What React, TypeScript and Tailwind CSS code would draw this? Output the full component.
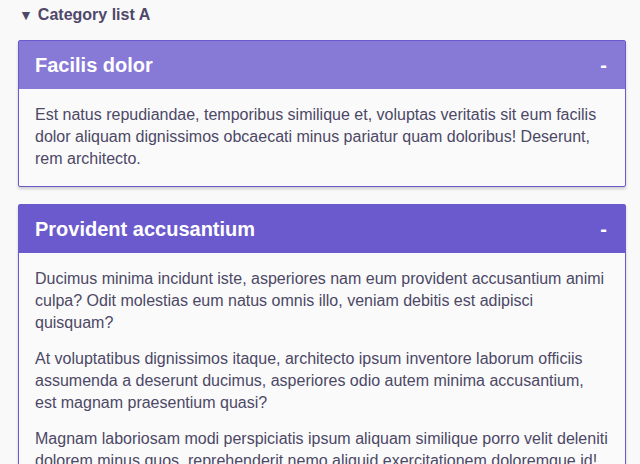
const items = [
  {
    title: "Facilis dolor",
    light: true,
    paragraphs: [
      "Est natus repudiandae, temporibus similique et, voluptas veritatis sit eum facilis dolor aliquam dignissimos obcaecati minus pariatur quam doloribus! Deserunt, rem architecto.",
    ],
  },
  {
    title: "Provident accusantium",
    light: false,
    paragraphs: [
      "Ducimus minima incidunt iste, asperiores nam eum provident accusantium animi culpa? Odit molestias eum natus omnis illo, veniam debitis est adipisci quisquam?",
      "At voluptatibus dignissimos itaque, architecto ipsum inventore laborum officiis assumenda a deserunt ducimus, asperiores odio autem minima accusantium, est magnam praesentium quasi?",
      "Magnam laboriosam modi perspiciatis ipsum aliquam similique porro velit deleniti dolorem minus quos, reprehenderit nemo aliquid exercitationem doloremque id! Voluptatum, quibusdam.",
    ],
  },
];

export default function App() {
  return (
    <div className="h-[464px] overflow-hidden bg-[#f9f9fa] pl-[18px] pr-[14px] font-['Liberation_Sans',Arial,sans-serif] text-[#4c4866]">
      <div className="flex items-center h-[30px] pl-[1px] text-[16px] font-bold text-[#4f4868]">
        <span className="text-[14px] mr-[5px]">▼</span>
        <span>Category list A</span>
      </div>

      <div className="mt-[10px] flex flex-col gap-[17px]">
        {items.map((item, i) => (
          <div
            key={i}
            className="border border-[#6a5acd] rounded-[2px] bg-[#fafafa] shadow-[0_2px_3px_rgba(0,0,0,0.18)]"
          >
            <div
              className={
                item.light
                  ? "flex items-center justify-between h-[48px] pb-[1px] px-[16px] bg-[#8779d6] text-white"
                  : "flex items-center justify-between h-[48px] pb-[1px] px-[16px] bg-[#6a5acd] text-white"
              }
            >
              <h3 className="text-[20px] font-bold">{item.title}</h3>
              <span className="text-[20px] font-bold pr-[2px]">-</span>
            </div>
            <div className="px-[16px] pt-[15px] pb-[16px] text-[16px] leading-[22px] flex flex-col gap-[14px]">
              {item.paragraphs.map((p, j) => (
                <p key={j}>{p}</p>
              ))}
            </div>
          </div>
        ))}
      </div>
    </div>
  );
}
